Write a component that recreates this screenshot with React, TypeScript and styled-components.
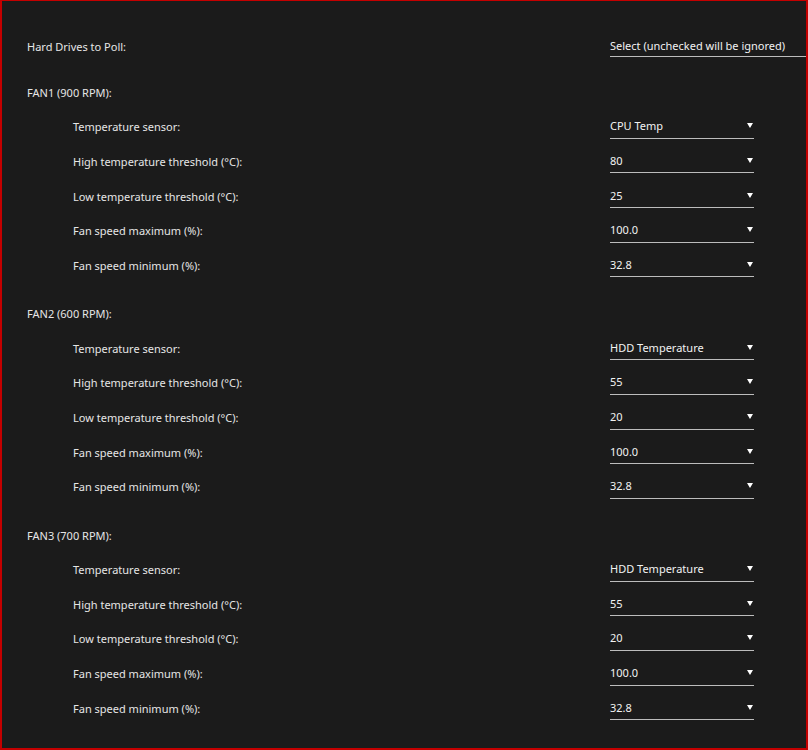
import React from "react";
import styled, { createGlobalStyle } from "styled-components";

const GlobalStyle = createGlobalStyle`
  html, body {
    margin: 0;
    padding: 0;
    background: #1b1b1b;
  }
`;

const Page = styled.div`
  box-sizing: border-box;
  width: 808px;
  height: 750px;
  border: 2px solid #c40000;
  border-top-width: 1px;
  background: #1b1b1b;
  padding-top: 28px;
  overflow: hidden;
  font-family: "Noto Sans", "Open Sans", sans-serif;
  font-size: 11px;
  color: #e6e6e6;
`;

const Section = styled.section<{ $gap?: number }>`
  display: flex;
  flex-direction: column;
  margin-top: ${(p) => p.$gap ?? 0}px;
`;

const Row = styled.div<{ $indent?: boolean }>`
  display: flex;
  align-items: center;
  height: 34.6px;
  padding-left: ${(p) => (p.$indent ? 71 : 25)}px;
`;

const Label = styled.span`
  flex: 1;
  white-space: nowrap;
`;

const SelectBox = styled.div<{ $wide?: boolean }>`
  box-sizing: border-box;
  display: flex;
  align-items: center;
  justify-content: space-between;
  width: ${(p) => (p.$wide ? 208 : 144)}px;
  margin-right: ${(p) => (p.$wide ? -12 : 52)}px;
  height: ${(p) => (p.$wide ? 22 : 24)}px;
  padding: 0 0 1px 0;
  border-bottom: 1px solid #bdbdbd;
  color: #f2f2f2;
  white-space: nowrap;
`;

const Arrow = styled.svg`
  width: 6px;
  height: 5px;
  margin-right: 1px;
  fill: #ffffff;
`;

type Field = { label: string; value: string };

const fans: { title: string; fields: Field[] }[] = [
  {
    title: "FAN1 (900 RPM):",
    fields: [
      { label: "Temperature sensor:", value: "CPU Temp" },
      { label: "High temperature threshold (°C):", value: "80" },
      { label: "Low temperature threshold (°C):", value: "25" },
      { label: "Fan speed maximum (%):", value: "100.0" },
      { label: "Fan speed minimum (%):", value: "32.8" },
    ],
  },
  {
    title: "FAN2 (600 RPM):",
    fields: [
      { label: "Temperature sensor:", value: "HDD Temperature" },
      { label: "High temperature threshold (°C):", value: "55" },
      { label: "Low temperature threshold (°C):", value: "20" },
      { label: "Fan speed maximum (%):", value: "100.0" },
      { label: "Fan speed minimum (%):", value: "32.8" },
    ],
  },
  {
    title: "FAN3 (700 RPM):",
    fields: [
      { label: "Temperature sensor:", value: "HDD Temperature" },
      { label: "High temperature threshold (°C):", value: "55" },
      { label: "Low temperature threshold (°C):", value: "20" },
      { label: "Fan speed maximum (%):", value: "100.0" },
      { label: "Fan speed minimum (%):", value: "32.8" },
    ],
  },
];

const Dropdown = ({ value }: { value: string }) => (
  <SelectBox>
    <span>{value}</span>
    <Arrow viewBox="0 0 6 5">
      <path d="M0 0h6L3 5z" />
    </Arrow>
  </SelectBox>
);

const App = () => {
  return (
    <Page>
      <GlobalStyle />
      <Section>
        <Row>
          <Label>Hard Drives to Poll:</Label>
          <SelectBox $wide>
            <span>Select (unchecked will be ignored)</span>
          </SelectBox>
        </Row>
      </Section>
      {fans.map((fan, i) => (
        <Section key={fan.title} $gap={i === 0 ? 11.4 : 13.9}>
          <Row>
            <Label>{fan.title}</Label>
          </Row>
          {fan.fields.map((f) => (
            <Row $indent key={f.label}>
              <Label>{f.label}</Label>
              <Dropdown value={f.value} />
            </Row>
          ))}
        </Section>
      ))}
    </Page>
  );
};

export default App;
